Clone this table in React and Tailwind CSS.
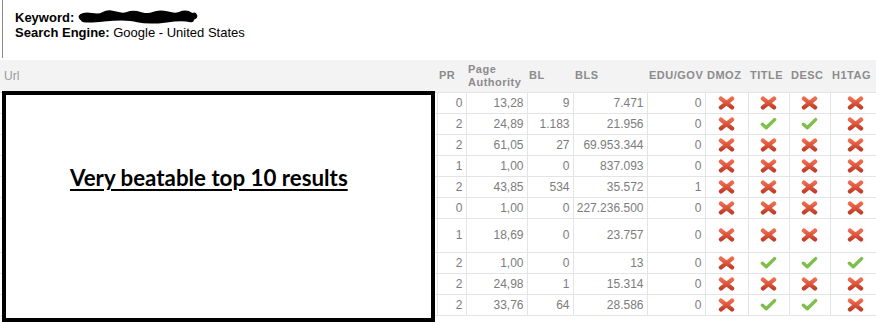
const rows = [
  { pr: "0", pa: "13,28", bl: "9", bls: "7.471", edu: "0", marks: [0, 0, 0, 0] },
  { pr: "2", pa: "24,89", bl: "1.183", bls: "21.956", edu: "0", marks: [0, 1, 1, 0] },
  { pr: "2", pa: "61,05", bl: "27", bls: "69.953.344", edu: "0", marks: [0, 0, 0, 0] },
  { pr: "1", pa: "1,00", bl: "0", bls: "837.093", edu: "0", marks: [0, 0, 0, 0] },
  { pr: "2", pa: "43,85", bl: "534", bls: "35.572", edu: "1", marks: [0, 0, 0, 0] },
  { pr: "0", pa: "1,00", bl: "0", bls: "227.236.500", edu: "0", marks: [0, 0, 0, 0] },
  { pr: "1", pa: "18,69", bl: "0", bls: "23.757", edu: "0", marks: [0, 0, 0, 0], tall: true },
  { pr: "2", pa: "1,00", bl: "0", bls: "13", edu: "0", marks: [0, 1, 1, 1] },
  { pr: "2", pa: "24,98", bl: "1", bls: "15.314", edu: "0", marks: [0, 0, 0, 0] },
  { pr: "2", pa: "33,76", bl: "64", bls: "28.586", edu: "0", marks: [0, 1, 1, 0] },
];

const headers = ["PR", "Page Authority", "BL", "BLS", "EDU/GOV", "DMOZ", "TITLE", "DESC", "H1TAG"];

function Cross() {
  return (
    <svg width="17" height="14" viewBox="0 0 17 14" className="mx-auto block">
      <defs>
        <linearGradient id="crossFill" x1="0" y1="0" x2="0" y2="1">
          <stop offset="0" stopColor="#ee6c4d" />
          <stop offset="1" stopColor="#c43f2a" />
        </linearGradient>
      </defs>
      <path d="M3 2.6 L14 11.4 M14 2.6 L3 11.4" stroke="url(#crossFill)" strokeWidth="4.4" strokeLinecap="round" fill="none" />
    </svg>
  );
}

function Check() {
  return (
    <svg width="17" height="14" viewBox="0 0 17 14" className="mx-auto block">
      <path d="M2.4 7.2 L6.3 10.8 L14.6 2.6" stroke="#7dbf4a" strokeWidth="3.4" strokeLinecap="round" strokeLinejoin="round" fill="none" />
    </svg>
  );
}

function Scribble() {
  return (
    <svg width="120" height="15" viewBox="0 0 120 15" className="inline-block align-[-3px]">
      <path
        d="M4 7 C10 3 18 10 26 5 S40 9 50 5 S66 10 76 5 S92 9 102 5 S112 8 116 6 M6 9 C20 11 40 4 60 9 S95 5 113 9"
        stroke="#000"
        strokeWidth="6.5"
        strokeLinecap="round"
        fill="none"
      />
    </svg>
  );
}

const cell = "border border-[#e4e4e4] pr-[3px] text-right";

export default function App() {
  return (
    <div className="relative h-[322px] w-[876px] overflow-hidden bg-white font-['Liberation_Sans',Arial,sans-serif]">
      <div className="ml-[2px] h-[58px] border-l border-[#8a8a8a] pl-[12px] pt-[10px] text-[13px] leading-[15px] text-black">
        <div>
          <b>Keyword:</b> <Scribble />
        </div>
        <div>
          <b>Search Engine:</b> Google - United States
        </div>
      </div>

      <table className="mt-[2px] w-[880px] table-fixed border-collapse text-[12px] text-[#7c7c7c]">
        <colgroup>
          <col className="w-[437px]" />
          <col className="w-[29px]" />
          <col className="w-[61px]" />
          <col className="w-[46px]" />
          <col className="w-[74px]" />
          <col className="w-[58px]" />
          <col className="w-[43px]" />
          <col className="w-[41px]" />
          <col className="w-[41px]" />
          <col className="w-[50px]" />
        </colgroup>
        <thead>
          <tr className="h-[32px] bg-[#f3f3f3]">
            <th className="border-b border-[#e4e4e4] pl-[4px] text-left align-middle text-[12px] font-normal text-[#999]">Url</th>
            {headers.map((h) => (
              <th
                key={h}
                className="border-b border-[#e4e4e4] pl-[2px] text-left align-middle text-[11px] font-bold leading-[13px] tracking-[0.5px] text-[#8c8c8c]"
              >
                {h === "Page Authority" ? (
                  <>
                    Page
                    <br />
                    Authority
                  </>
                ) : (
                  h
                )}
              </th>
            ))}
          </tr>
        </thead>
        <tbody>
          {rows.map((r, i) => (
            <tr key={i} className={r.tall ? "h-[34px]" : "h-[21px]"}>
              <td className="border-b border-[#e4e4e4]"></td>
              <td className={cell}>{r.pr}</td>
              <td className={cell}>{r.pa}</td>
              <td className={cell}>{r.bl}</td>
              <td className={cell}>{r.bls}</td>
              <td className={cell}>{r.edu}</td>
              {r.marks.map((m, j) => (
                <td key={j} className="border border-[#e4e4e4] align-middle">
                  {m ? <Check /> : <Cross />}
                </td>
              ))}
            </tr>
          ))}
        </tbody>
      </table>

      <div className="absolute left-[2px] top-[91px] h-[231px] w-[433px] border-[4px] border-black bg-white pl-[64px] pt-[70px]">
        <span className="font-['Lato',sans-serif] text-[22.3px] font-bold leading-[26px] text-black underline decoration-[2px] underline-offset-[3px]">
          Very beatable top 10 results
        </span>
      </div>
    </div>
  );
}
